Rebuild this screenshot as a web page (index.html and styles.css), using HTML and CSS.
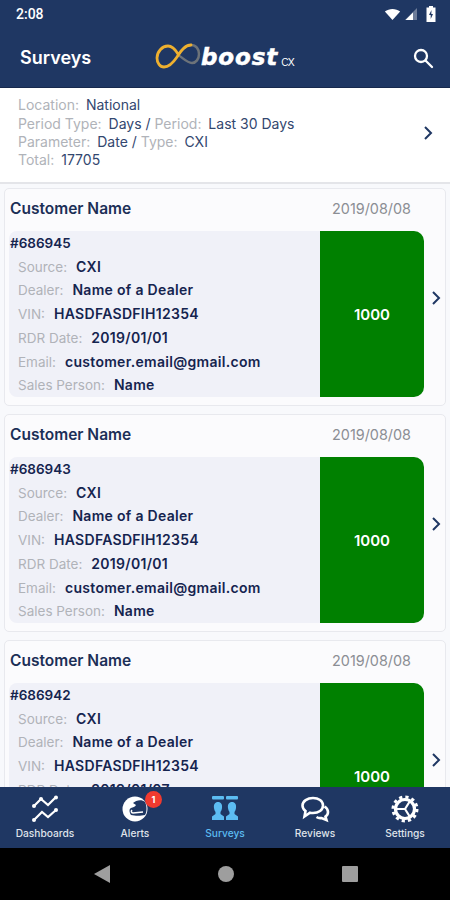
FILE: index.html
```html
<!DOCTYPE html>
<html lang="en">
<head>
  <meta charset="utf-8">
  <meta name="viewport" content="width=device-width, initial-scale=1">
  <title>Surveys</title>
  <link rel="stylesheet" href="styles.css">
</head>
<body>
  <div class="screen">
    <div class="status-bar">
      <span class="clock">2:08</span>
      <div class="status-icons">
        <svg width="17" height="13" viewBox="0 0 20 14"><path d="M1 3.500C6 -.5 14 -.5 19 3.500L10 13.500Z" fill="#fff"/></svg>
        <svg width="14" height="14" viewBox="0 0 14 14"><path d="M13 1V13H1Z" fill="#fff" opacity=".35"/><path d="M9 5.500V13H1.500Z" fill="#fff"/></svg>
        <svg class="battery" width="10" height="16" viewBox="0 0 10 16"><path d="M3 0H7V1.500H9.500V16H.5V1.500H3Z" fill="#fff"/><path d="M5.500 4L3 9H4.700V13L7 8H5.300Z" fill="#1f3763"/></svg>
      </div>
    </div>

    <div class="app-bar">
      <h1>Surveys</h1>
      <div class="logo">
        <svg width="46" height="28" viewBox="0 0 46 28" fill="none">
          <path d="M23 13C28 5 33 3 36 3C41 3 44 7 44 12C44 17 41 21 37 21C32 21 27 15 23 13" stroke="#6d7379" stroke-width="2.500" stroke-linecap="round"/>
          <path d="M36 3C30 3 26 9 22 15C18 21 14 25 9 25C5 25 2 21 2 16C2 10 7 4 13 4C17 4 20 7 23 12" stroke="#eeb02f" stroke-width="2.800" stroke-linecap="round"/>
        </svg>
        <span class="logo-word">boost</span><span class="logo-cx">cx</span>
      </div>
      <svg class="search" width="22" height="22" viewBox="0 0 22 22" fill="none" stroke="#fff" stroke-width="2.300" stroke-linecap="round"><circle cx="9" cy="9" r="6"/><path d="M13.500 13.500L20 20"/></svg>
    </div>

    <div class="filters">
      <div class="filter-text">
        <div><span class="muted">Location:</span> National</div>
        <div><span class="muted">Period Type:</span> Days / <span class="muted">Period:</span> Last 30 Days</div>
        <div><span class="muted">Parameter:</span> Date / <span class="muted">Type:</span> CXI</div>
        <div><span class="muted">Total:</span> 17705</div>
      </div>
      <svg class="chevron" width="10" height="16" viewBox="0 0 10 16" fill="none"><path d="M2 2L8 8L2 14"/></svg>
    </div>

    <div class="list">
      <div class="card">
        <div class="card-head"><span class="customer">Customer Name</span><span class="date">2019/08/08</span></div>
        <div class="card-body">
          <div class="details">
            <div class="survey-id">#686945</div>
            <div class="row"><span class="label">Source:</span>CXI</div>
            <div class="row"><span class="label">Dealer:</span>Name of a Dealer</div>
            <div class="row"><span class="label">VIN:</span>HASDFASDFIH12354</div>
            <div class="row"><span class="label">RDR Date:</span>2019/01/01</div>
            <div class="row"><span class="label">Email:</span>customer.email@gmail.com</div>
            <div class="row"><span class="label">Sales Person:</span>Name</div>
          </div>
          <div class="score">1000</div>
          <svg class="chevron" width="10" height="16" viewBox="0 0 10 16" fill="none"><path d="M2 2L8 8L2 14"/></svg>
        </div>
      </div>

      <div class="card">
        <div class="card-head"><span class="customer">Customer Name</span><span class="date">2019/08/08</span></div>
        <div class="card-body">
          <div class="details">
            <div class="survey-id">#686943</div>
            <div class="row"><span class="label">Source:</span>CXI</div>
            <div class="row"><span class="label">Dealer:</span>Name of a Dealer</div>
            <div class="row"><span class="label">VIN:</span>HASDFASDFIH12354</div>
            <div class="row"><span class="label">RDR Date:</span>2019/01/01</div>
            <div class="row"><span class="label">Email:</span>customer.email@gmail.com</div>
            <div class="row"><span class="label">Sales Person:</span>Name</div>
          </div>
          <div class="score">1000</div>
          <svg class="chevron" width="10" height="16" viewBox="0 0 10 16" fill="none"><path d="M2 2L8 8L2 14"/></svg>
        </div>
      </div>

      <div class="card card-tall">
        <div class="card-head"><span class="customer">Customer Name</span><span class="date">2019/08/08</span></div>
        <div class="card-body">
          <div class="details">
            <div class="survey-id">#686942</div>
            <div class="row"><span class="label">Source:</span>CXI</div>
            <div class="row"><span class="label">Dealer:</span>Name of a Dealer</div>
            <div class="row"><span class="label">VIN:</span>HASDFASDFIH12354</div>
            <div class="row"><span class="label">RDR Date:</span>2019/01/07</div>
          </div>
          <div class="score">1000</div>
          <svg class="chevron" width="10" height="16" viewBox="0 0 10 16" fill="none"><path d="M2 2L8 8L2 14"/></svg>
        </div>
      </div>
    </div>

    <div class="tab-bar">
      <div class="tab">
        <svg width="30" height="28" viewBox="0 0 30 28" fill="none" stroke="#fff" stroke-width="2.200">
          <path d="M4 11L11 4L18 10L26 2"/><path d="M4 25L12 17L18 22L26 15"/>
          <g fill="#fff" stroke="none"><circle cx="4" cy="11" r="2"/><circle cx="11" cy="4" r="2"/><circle cx="26" cy="2.500" r="2"/><circle cx="4" cy="25" r="2"/><circle cx="26" cy="15" r="2"/></g>
        </svg>
        <span>Dashboards</span>
      </div>
      <div class="tab">
        <div class="alert-icon">
          <svg width="28" height="28" viewBox="0 0 28 28">
            <circle cx="14" cy="14" r="12.500" fill="#fff"/>
            <path d="M12 8C15 5 21 4 24 7C26 11 26 17 24 20C20 21 14 21 10 20C8 17 8 14 10 13C12 12 14 12 15 10Z" fill="#1f3763"/>
            <path d="M11 15C10 16 10 18 12 18L22 17" fill="none" stroke="#fff" stroke-width="1.600"/>
          </svg>
          <span class="badge">1</span>
        </div>
        <span>Alerts</span>
      </div>
      <div class="tab tab-active">
        <svg width="28" height="28" viewBox="0 0 28 28" fill="#5cbcf2">
          <rect x="1" y="1" width="12" height="3.500" rx="1"/><rect x="15" y="1" width="12" height="3.500" rx="1"/>
          <path d="M7 7C10 7 11.500 9.500 11 13C10.800 15 10 16 9.500 17V19L13 21.500V25H1V21.500L4.500 19V17C4 16 3.200 15 3 13C2.500 9.500 4 7 7 7Z"/>
          <path d="M21 7C24 7 25.500 9.500 25 13C24.800 15 24 16 23.500 17V19L27 21.500V25H15V21.500L18.500 19V17C18 16 17.200 15 17 13C16.500 9.500 18 7 21 7Z"/>
        </svg>
        <span>Surveys</span>
      </div>
      <div class="tab">
        <svg width="30" height="28" viewBox="0 0 30 28" fill="none" stroke="#fff" stroke-width="2.600">
          <path d="M24.500 11.500C27 13 28 15 28 17C28 19 27 20.500 25.500 21.500L26.500 25L21.500 23C20 23.300 18 23 16.500 22"/>
          <path d="M23 10.500C23 15 18.500 18 13 18C11.800 18 11 18 10 17.700L4.500 21.500L5.500 16C3.500 14.500 2.500 12.700 2.500 10.500C2.500 6 7.500 3 13 3C18.500 3 23 6 23 10.500Z"/>
        </svg>
        <span>Reviews</span>
      </div>
      <div class="tab">
        <svg width="28" height="28" viewBox="0 0 28 28" fill="none" stroke="#fff">
          <circle cx="14" cy="14" r="9.500" stroke-width="3.200"/>
          <circle cx="14" cy="14" r="12" stroke-width="3" stroke-dasharray="3.200 3.080"/>
          <path d="M14 14L5 14M14 14L19 6M14 14L19 22" stroke-width="2.200"/>
        </svg>
        <span>Settings</span>
      </div>
    </div>

    <div class="nav-bar">
      <svg width="18" height="20" viewBox="0 0 18 20"><path d="M17 1V19L1 10Z" fill="#9e9e9e"/></svg>
      <svg width="18" height="18" viewBox="0 0 18 18"><circle cx="9" cy="9" r="8" fill="#9e9e9e"/></svg>
      <svg width="18" height="18" viewBox="0 0 18 18"><rect x="1" y="1" width="16" height="16" rx="1" fill="#9e9e9e"/></svg>
    </div>
  </div>
</body>
</html>
```

FILE: styles.css
```css
* {
  box-sizing: border-box;
}

body {
  margin: 0;
  font-family: 'Inter', 'Noto Sans', sans-serif;
  background: #f8f9fc;
}

.screen {
  width: 450px;
  height: 900px;
  display: flex;
  flex-direction: column;
  overflow: hidden;
}

.status-bar {
  height: 28px;
  background: #1f3763;
  color: white;
  display: flex;
  justify-content: space-between;
  align-items: center;
  padding: 0 14px 0 16px;
  flex-shrink: 0;
}

.clock {
  font-family: 'Roboto', sans-serif;
  font-size: 14px;
  font-weight: 500;
}

.status-icons {
  display: flex;
  align-items: center;
  gap: 3px;
}

.battery {
  margin-left: 5px;
}

.app-bar {
  height: 60px;
  background: #1f3763;
  display: flex;
  align-items: center;
  justify-content: space-between;
  padding: 0 16px 0 20px;
  flex-shrink: 0;
  position: relative;
  border-bottom: 1px solid #17294d;
}

.app-bar h1 {
  margin: 0;
  color: white;
  font-size: 18px;
  font-weight: 600;
}

.logo {
  position: absolute;
  left: 155px;
  top: 14px;
  display: flex;
  align-items: center;
  color: white;
}

.logo-word {
  font-family: 'DejaVu Sans', sans-serif;
  font-size: 23px;
  font-weight: 700;
  font-style: italic;
  letter-spacing: 0.9px;
  -webkit-text-stroke: 0.5px white;
  width: 80px;
  padding-top: 2px;
}

.logo-cx {
  font-size: 14px;
  font-weight: 300;
  padding-top: 8px;
  letter-spacing: -1px;
}

.filters {
  height: 96px;
  background: white;
  border-bottom: 2px solid #e4e5e9;
  display: flex;
  align-items: center;
  justify-content: space-between;
  padding: 0 17px 4px 18px;
  flex-shrink: 0;
}

.filter-text {
  font-size: 14px;
  line-height: 18.300px;
  color: #33476f;
}

.muted {
  color: #b0b3b9;
  margin-right: 3px;
}

.chevron path {
  stroke: #1f3763;
  stroke-width: 2;
}

.list {
  flex: 1;
  min-height: 0;
  overflow: hidden;
  padding: 4px 4px 0;
  background: #f8f9fc;
}

.card {
  height: 218px;
  margin-bottom: 8px;
  background: #fbfbfd;
  border: 1px solid #e8e9ee;
  border-radius: 5px;
  padding: 0 4px;
  display: flex;
  flex-direction: column;
}

.card-head {
  height: 42px;
  display: flex;
  align-items: center;
  justify-content: space-between;
  padding: 0 30px 3px 1px;
  flex-shrink: 0;
}

.customer {
  font-size: 15.500px;
  font-weight: 600;
  color: #1c2f57;
}

.date {
  font-size: 14.400px;
  color: #8b8e94;
}

.card-body {
  height: 166px;
  display: flex;
  align-items: center;
}

.card-tall {
  height: 238px;
}

.card-tall .card-body {
  height: 186px;
}

.details {
  flex: 1;
  height: 100%;
  background: #f0f1f8;
  border-radius: 8px 0 0 8px;
  padding-top: 1px;
  font-size: 14px;
  font-weight: 600;
  letter-spacing: 0.3px;
  color: #15244f;
}

.survey-id {
  height: 22.500px;
  line-height: 22.500px;
  padding-left: 1px;
  font-size: 13.500px;
  letter-spacing: 0;
}

.row {
  height: 23.800px;
  line-height: 23.800px;
  padding-left: 9px;
  white-space: nowrap;
}

.label {
  font-size: 13.500px;
  font-weight: 400;
  letter-spacing: 0;
  color: #b0b3b9;
  margin-right: 9px;
}

.score {
  width: 104px;
  height: 100%;
  background: #008000;
  color: white;
  font-size: 15px;
  font-weight: 600;
  border-radius: 0 10px 10px 0;
  display: flex;
  align-items: center;
  justify-content: center;
}

.card-body .chevron {
  margin: 0 0 32px 7px;
  flex-shrink: 0;
}

.tab-bar {
  height: 61px;
  background: #1f3763;
  display: grid;
  grid-template-columns: repeat(5, 1fr);
  flex-shrink: 0;
}

.tab {
  display: flex;
  flex-direction: column;
  align-items: center;
  padding-top: 8px;
  gap: 4px;
  color: #dfe3ea;
  font-size: 10.200px;
  font-weight: 500;
}

.tab-active {
  color: #5cbcf2;
}

.alert-icon {
  position: relative;
  height: 28px;
}

.badge {
  position: absolute;
  top: -4px;
  right: -13px;
  width: 17px;
  height: 17px;
  border-radius: 50%;
  background: #f13a2f;
  color: white;
  font-size: 9px;
  font-weight: 700;
  display: flex;
  align-items: center;
  justify-content: center;
}

.nav-bar {
  height: 52px;
  background: black;
  display: flex;
  align-items: center;
  justify-content: center;
  gap: 106px;
  padding-left: 1px;
  flex-shrink: 0;
}
```
